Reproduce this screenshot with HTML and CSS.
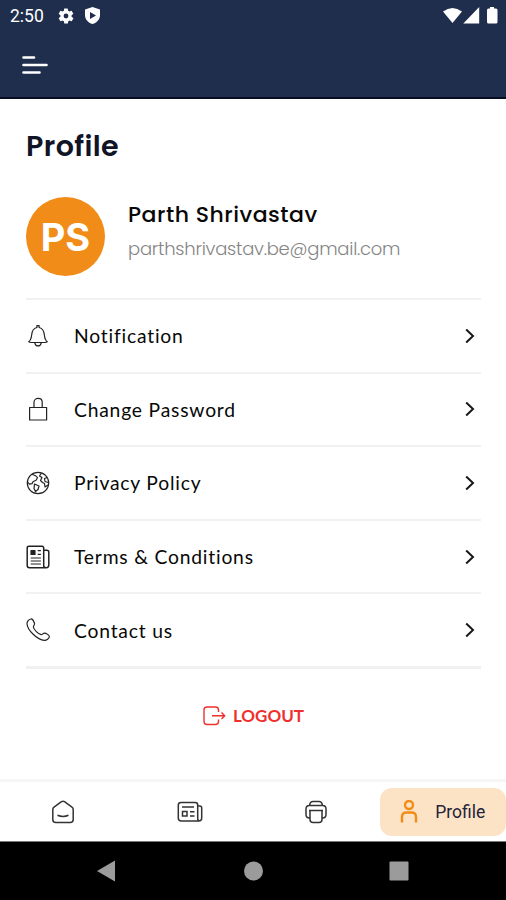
FILE: index.html
```html
<!DOCTYPE html>
<html lang="en">
<head>
    <meta charset="UTF-8">
    <meta name="viewport" content="width=device-width, initial-scale=1.0">
    <title>Profile</title>
    <link rel="stylesheet" href="styles.css">
</head>
<body>
    <header class="top">
        <div class="status">
            <span class="time">2:50</span>
            <svg class="gear" width="18" height="18" viewBox="0 0 24 24"><path fill="#fff" fill-rule="evenodd" d="M19.4 13a7.5 7.5 0 0 0 0-2l2.1-1.6a.5.5 0 0 0 .1-.7l-2-3.4a.5.5 0 0 0-.6-.2l-2.5 1a7.3 7.3 0 0 0-1.7-1l-.4-2.6a.5.5 0 0 0-.5-.5h-4a.5.5 0 0 0-.5.5L9.2 5.1a7.3 7.3 0 0 0-1.7 1L5 5.1a.5.5 0 0 0-.6.2l-2 3.4a.5.5 0 0 0 .1.7L4.6 11a7.5 7.5 0 0 0 0 2l-2.1 1.6a.5.5 0 0 0-.1.7l2 3.4c.1.2.4.3.6.2l2.5-1a7.3 7.3 0 0 0 1.7 1l.4 2.6c0 .3.2.5.5.5h4c.3 0 .5-.2.5-.5l.4-2.6a7.3 7.3 0 0 0 1.7-1l2.5 1c.2.1.5 0 .6-.2l2-3.4a.5.5 0 0 0-.1-.7zM12 15.2a3.2 3.2 0 1 1 0-6.4 3.2 3.2 0 0 1 0 6.4z"/></svg>
            <svg class="shield" width="15" height="17" viewBox="0 0 15 17"><path fill="#fff" fill-rule="evenodd" d="M7.5 0L15 2.6v5.6c0 4-3 7.4-7.5 8.8C3 15.6 0 12.2 0 8.2V2.6zM5 5v7l6-3.5z"/></svg>
            <svg class="signals" width="57" height="18" viewBox="0 0 57 18"><g fill="#fff"><path d="M0 4.5Q9.5-2.5 19 4.5L9.5 16z"/><path d="M36.2 0v16.5H20.3z"/><path d="M47 0h4v1.500h2q1.500 0 1.500 1.500v12q0 1.500-1.500 1.500h-7.500Q44 16.500 44 15V3q0-1.500 1.500-1.500H47z"/></g></svg>
        </div>
        <svg class="menu" width="26" height="20" viewBox="0 0 26 20"><path d="M1.500 2.500h10.500M1.500 10h23M1.500 17.500h16" stroke="#fff" stroke-width="2.600" stroke-linecap="round"/></svg>
    </header>

    <main class="content">
        <h1>Profile</h1>
        <section class="user">
            <div class="avatar">PS</div>
            <div class="info">
                <div class="name">Parth Shrivastav</div>
                <div class="email">parthshrivastav.be@gmail.com</div>
            </div>
        </section>

        <ul class="list">
            <li>
                <svg class="icon" viewBox="0 0 24 24"><path d="M2.700 17.700c2.400-1.600 2.600-3.500 2.900-6.500.3-4.200 2.300-7 5.300-7.700V1.700h2.200v1.800c3 .7 5 3.500 5.300 7.700.3 3 .5 4.900 2.900 6.500-.6.9-2 .8-3 .8H5.700c-1 0-2.400.1-3-.8zM8.800 18.800c.8 4.200 5.600 4.200 6.400 0"/></svg>
                <span>Notification</span>
                <svg class="arrow" viewBox="0 0 10 16"><path d="M1.200 1.500L8 8l-6.800 6.500"/></svg>
            </li>
            <li>
                <svg class="icon" viewBox="0 0 24 24"><path d="M3.600 10.500h17v12.500h-17zM8 10.500V5.200c0-5 8.200-5 8.200 0v5.300"/></svg>
                <span>Change Password</span>
                <svg class="arrow" viewBox="0 0 10 16"><path d="M1.200 1.500L8 8l-6.800 6.500"/></svg>
            </li>
            <li>
                <svg class="icon" viewBox="0 0 24 24"><circle cx="12" cy="12" r="10.700"/><path d="M6 3.200l3.500 1.500 2 2-1.500 2.500-3 1.500-1 2-2.500.5-2-2M8.500 13l4.500 2-1 3.500-2.500 2-1.500-3zM15.500 2l-2 3 2.500 1.500-1.500 3 2 2 2 1 .5 3.500 3-2M21 6.500l-2.500 1 .5 3 3 1"/></svg>
                <span>Privacy Policy</span>
                <svg class="arrow" viewBox="0 0 10 16"><path d="M1.200 1.500L8 8l-6.800 6.500"/></svg>
            </li>
            <li>
                <svg class="icon" viewBox="0 0 24 24"><path stroke-width="1.500" d="M17.700 20.500V3q0-1.700-1.700-1.700H3Q1.200 1.300 1.200 3v17.500q0 2.200 2.200 2.200h16.800q2.600 0 2.600-2.600V7.300q0-2-2-2h-3M17.700 20.500q0 2.200 2 2.200"/><path d="M11.700 5.700h3.200M11.700 9.300h3.200M4.700 13h10.200M4.700 16h10.200M4.700 19h10.200"/><path fill="#222" d="M5 5.500h4v4H5z"/></svg>
                <span>Terms &amp; Conditions</span>
                <svg class="arrow" viewBox="0 0 10 16"><path d="M1.200 1.500L8 8l-6.800 6.500"/></svg>
            </li>
            <li>
                <svg class="icon" viewBox="0 0 24 24"><path d="M4.700 1C6 .6 7.800 3.400 8.400 5c.7 2-1.200 2.600-1 4 .3 2.500 5 7.300 7.700 7.600 1.500.2 2-2 4-1.500 1.700.5 4.500 2.400 4.200 3.700-.4 1.700-2.600 3.800-5 3.600C11.400 22 1.300 12 1 5.700.9 3.400 3 1.400 4.700 1z"/></svg>
                <span>Contact us</span>
                <svg class="arrow" viewBox="0 0 10 16"><path d="M1.200 1.500L8 8l-6.800 6.500"/></svg>
            </li>
        </ul>

        <div class="logout">
            <svg width="24" height="20" viewBox="0 0 24 20"><path d="M15.500 6V4q0-3-3-3H4Q1 1 1 4v11.500q0 3 3 3h8.500q3 0 3-3v-2M9 9.700h12.500M18.500 6.500l3.200 3.200-3.200 3.200" fill="none" stroke="#f0302d" stroke-width="1.400"/></svg>
            <span>LOGOUT</span>
        </div>
    </main>

    <nav class="tabs">
        <div class="tab">
            <svg width="24" height="24" viewBox="0 0 24 24"><path d="M1.800 9.500Q1.800 8 3 7.200l7.500-5.500q1.500-1 3 0L21 7.200q1.200.8 1.200 2.300v10q0 3-3 3H4.800q-3 0-3-3zM6.500 15.300q5.500 2.300 11 0"/></svg>
        </div>
        <div class="tab">
            <svg width="26" height="22" viewBox="0 0 26 22"><path d="M20.700 17.500V4q0-2.500-2.500-2.500H4Q1.300 1.500 1.300 4v13q0 3 3 3h17.400q3 0 3-3V7q0-2-2-2h-2M20.700 17.500q0 2.500 2.300 2.500M5 6h12M5.500 10.500H10V15H5.500zM13 10.700h4.500M13 15h4.500"/></svg>
        </div>
        <div class="tab">
            <svg width="24" height="24" viewBox="0 0 24 24"><path d="M5.500 5.500Q6 1.500 9 1.500h6q3 0 3.500 4M5.500 18q-3.500 0-3.500-3.500V9q0-3.500 3.500-3.500h13Q22 5.500 22 9v5.500q0 3.500-3.500 3.500M5 10.500h14M6 10.500v9q0 3 3 3h6q3 0 3-3v-9"/></svg>
        </div>
        <div class="tab active">
            <svg width="18" height="24" viewBox="0 0 18 24"><circle cx="9" cy="5" r="4"/><path d="M2 22.500V17q0-4.500 4.500-4.500h5q4.500 0 4.500 4.500v5.500"/></svg>
            <span>Profile</span>
        </div>
    </nav>

    <footer class="system">
        <svg width="506" height="58" viewBox="0 0 506 58"><g fill="#9b9b9b"><path d="M97 29l18-10.500v21z"/><circle cx="253.500" cy="29" r="9.500"/><rect x="389.500" y="19.500" width="19" height="19" rx="1"/></g></svg>
    </footer>
</body>
</html>
```

FILE: styles.css
```css
* {
    box-sizing: border-box;
}

body {
    margin: 0;
    height: 900px;
    display: flex;
    flex-direction: column;
    background-color: #fff;
    font-family: Poppins, Inter, sans-serif;
    color: #080808;
    overflow: hidden;
}

svg {
    display: block;
    flex-shrink: 0;
}

.top {
    height: 99px;
    background-color: #1e2e4c;
    border-bottom: 2px solid #070d20;
}

.status {
    height: 31px;
    display: flex;
    align-items: center;
    padding: 0 6px 0 10px;
    color: #fff;
}

.time {
    width: 47px;
    font: 17.5px/32px Roboto, sans-serif;
}

.shield {
    margin-left: 10px;
}

.signals {
    margin-left: auto;
}

.menu {
    margin: 24px 0 0 22px;
}

.content {
    height: 680px;
    padding: 0 25px 0 26px;
}

h1 {
    margin: 27px 0 0;
    font-size: 28.5px;
    line-height: 40px;
    font-weight: 600;
    letter-spacing: 0.4px;
    color: #101426;
}

.user {
    display: flex;
    height: 80px;
    margin-top: 31px;
}

.avatar {
    width: 79px;
    height: 79px;
    border-radius: 50%;
    background-color: #f28c18;
    color: #fff;
    font: 700 38px/81px Inter, sans-serif;
    text-align: center;
}

.info {
    margin-left: 23px;
}

.name {
    margin-top: 1px;
    font-size: 22px;
    line-height: 33px;
    font-weight: 500;
    letter-spacing: 0.5px;
}

.email {
    font-size: 18px;
    line-height: 36px;
    font-weight: 300;
    letter-spacing: -0.25px;
    color: #858585;
}

.list {
    list-style: none;
    margin: 21px 0 0;
    padding: 0;
    border-bottom: 3px solid #f0f0f0;
}

.list li {
    height: 73.6px;
    display: flex;
    align-items: center;
    border-top: 2px solid #f1f1f1;
    font: 19.3px/28px Lato, sans-serif;
    letter-spacing: 0.8px;
}

.list span {
    margin-left: 24px;
    padding-top: 1px;
}

.icon {
    width: 24px;
    height: 24px;
    fill: none;
    stroke: #222;
    stroke-width: 1.2;
    stroke-linejoin: round;
}

.arrow {
    width: 10px;
    height: 16px;
    margin: 0 6px 0 auto;
    fill: none;
    stroke: #181818;
    stroke-width: 2;
}

.logout {
    display: flex;
    justify-content: center;
    align-items: center;
    gap: 6px;
    height: 30px;
    margin-top: 32px;
    font: bold 17px Lato, sans-serif;
    color: #f0302d;
}

.tabs {
    display: grid;
    grid-template-columns: repeat(4, 1fr);
    height: 63px;
    padding-top: 6px;
    border-top: 3px solid #f6f6f6;
    border-bottom: 1px solid #777;
}

.tab {
    display: flex;
    align-items: center;
    justify-content: center;
    height: 48px;
}

.tab svg {
    fill: none;
    stroke: #333;
    stroke-width: 1.5;
}

.tab.active {
    gap: 17px;
    background-color: #fde3c5;
    border-radius: 12px;
    color: #23243b;
    font: 17.5px Roboto, sans-serif;
}

.tab.active svg {
    stroke: #f28c18;
    stroke-width: 2.4;
}

.system {
    height: 58px;
    background-color: #000;
}
```
